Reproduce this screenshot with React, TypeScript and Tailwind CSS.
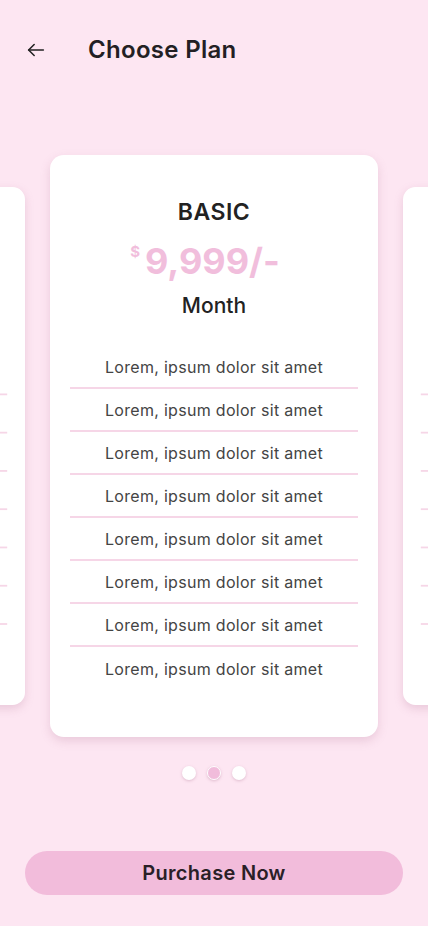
import React from "react";

const items = Array.from({ length: 8 }, () => "Lorem, ipsum dolor sit amet");

function PlanCard({ className = "" }: { className?: string }) {
  return (
    <div
      className={`w-[328px] h-[582px] shrink-0 rounded-[14px] bg-white shadow-[0_4px_10px_rgba(180,120,150,0.25)] px-5 pt-[40px] flex flex-col items-center ${className}`}
    >
      <div className="text-[23px] leading-[34px] font-semibold text-[#222] tracking-[0.5px]">BASIC</div>
      <div className="flex items-start text-[#f1bedc] font-bold mt-[11px] pr-[18px]">
        <span className="text-[15px] leading-[20px] mt-[2px] mr-[5px]">$</span>
        <span className="text-[36px] leading-[42px]">9,999/-</span>
      </div>
      <div className="text-[21px] leading-[30px] font-medium text-[#222] mt-[9px]">Month</div>
      <div className="w-full mt-[25px] flex flex-col">
        {items.map((t, i) => (
          <div
            key={i}
            className={`h-[43px] flex items-center justify-center text-[16px] tracking-[0.3px] text-[#444] ${
              i < items.length - 1 ? "border-b-2 border-[#f6d6e7]" : ""
            }`}
          >
            {t}
          </div>
        ))}
      </div>
    </div>
  );
}

export default function App() {
  return (
    <div
      className="w-[428px] h-[926px] bg-[#fde6f2] flex flex-col overflow-hidden"
      style={{ fontFamily: "Inter, 'Open Sans', sans-serif" }}
    >
      <header className="h-[100px] flex items-start pt-[33px] px-[25px]">
        <div className="flex items-center h-[34px]">
          <svg width="22" height="22" viewBox="0 0 24 24" fill="none" stroke="#222" strokeWidth="1.7" strokeLinecap="round" strokeLinejoin="round">
            <path d="M20 12H4" />
            <path d="M10 6l-6 6 6 6" />
          </svg>
          <h1 className="ml-[41px] text-[24px] font-semibold text-[#231f24] tracking-[0.3px]">Choose Plan</h1>
        </div>
      </header>
      <div className="mt-[55px] flex justify-center items-center gap-[25px] w-[428px]">
        <PlanCard className="origin-right scale-[0.89]" />
        <PlanCard />
        <PlanCard className="origin-left scale-[0.89]" />
      </div>
      <div className="mt-[29px] flex justify-center gap-[11px]">
        <span className="w-[14px] h-[14px] rounded-full bg-white shadow-[0_1px_3px_rgba(170,110,140,0.35)]" />
        <span className="w-[14px] h-[14px] rounded-full bg-[#f1bcdb] border border-white shadow-[0_1px_3px_rgba(170,110,140,0.35)]" />
        <span className="w-[14px] h-[14px] rounded-full bg-white shadow-[0_1px_3px_rgba(170,110,140,0.35)]" />
      </div>
      <div className="mt-[71px] px-[25px]">
        <button className="w-full h-[44px] rounded-full bg-[#f2bcdb] text-[20px] font-semibold tracking-[0.3px] text-[#2a1f27]">
          Purchase Now
        </button>
      </div>
    </div>
  );
}
